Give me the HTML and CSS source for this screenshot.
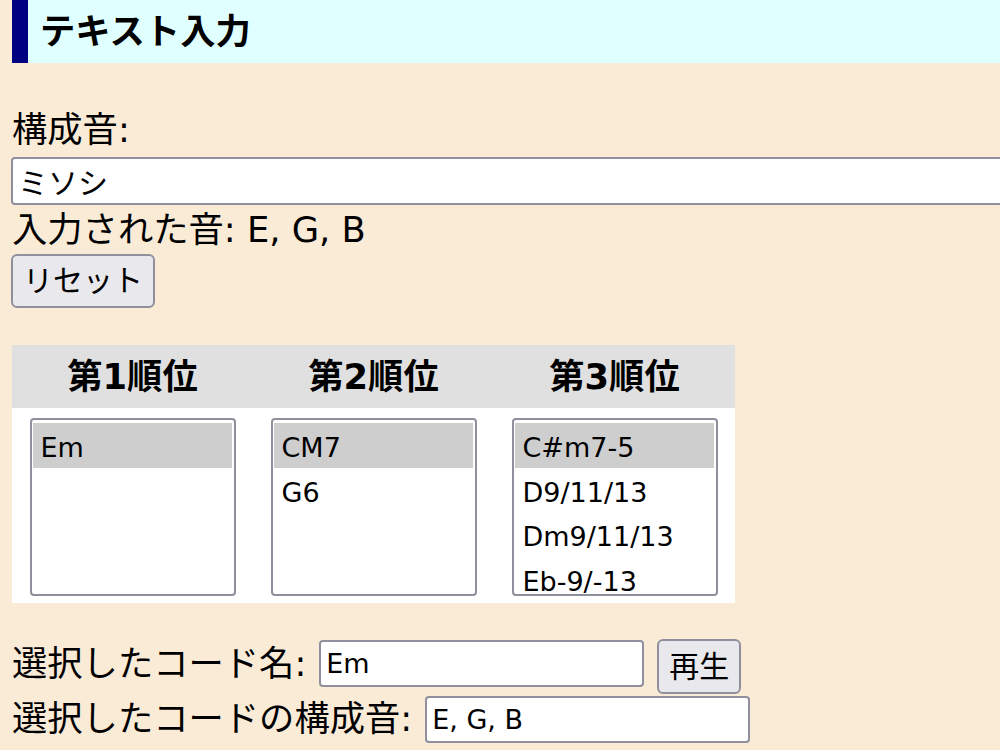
FILE: index.html
```
<!DOCTYPE html>
<html lang="ja">
<head>
<meta charset="utf-8">
<title>テキスト入力</title>
<link rel="stylesheet" href="styles.css">
</head>
<body>
<h2 class="title">テキスト入力</h2>
<div class="field-label">構成音:</div>
<input class="ctl notes-input" type="text" value="ミソシ">
<div class="parsed">入力された音: E, G, B</div>
<button class="btn btn-reset" type="button">リセット</button>
<table class="rank">
  <thead>
    <tr><th>第1順位</th><th>第2順位</th><th>第3順位</th></tr>
  </thead>
  <tbody>
    <tr>
      <td><div class="listbox" role="listbox"><div class="opt sel">Em</div></div></td>
      <td><div class="listbox" role="listbox"><div class="opt sel">CM7</div><div class="opt">G6</div></div></td>
      <td><div class="listbox" role="listbox"><div class="opt sel">C#m7-5</div><div class="opt">D9/11/13</div><div class="opt">Dm9/11/13</div><div class="opt">Eb-9/-13</div></div></td>
    </tr>
  </tbody>
</table>
<div class="row row-name">
  <span class="lbl">選択したコード名:</span>
  <input class="ctl out" type="text" value="Em">
  <button class="btn btn-play" type="button">再生</button>
</div>
<div class="row row-notes">
  <span class="lbl">選択したコードの構成音:</span>
  <input class="ctl out" type="text" value="E, G, B">
</div>
</body>
</html>
```

FILE: styles.css
```
html {
  overflow: hidden;
}

body {
  margin: 0;
  padding-left: 12px;
  background: #faebd7;
  color: #000;
  font-family: "DejaVu Sans", "Noto Sans CJK JP", sans-serif;
  font-size: 35.3px;
  line-height: 49px;
}

.title {
  margin: 0;
  background: #e0ffff;
  border-left: 16px solid #000080;
  padding: 7px 12px;
  font-size: 35.3px;
  line-height: 49px;
  font-weight: bold;
}

.field-label {
  margin-top: 42px;
}

.ctl {
  box-sizing: border-box;
  border: 2px solid #8f8f9d;
  border-radius: 4px;
  background: #fff;
  color: #000;
  padding: 0 5px;
  font-family: "DejaVu Sans", "Noto Sans CJK JP", sans-serif;
  font-size: 27px;
  outline: none;
}

.notes-input {
  display: block;
  margin: 3px 0 0 -1px;
  width: 1100px;
  height: 48px;
  font-size: 30px;
  padding-left: 5px;
}

.btn {
  box-sizing: border-box;
  background: #e9e9ed;
  border: 2px solid #8f8f9d;
  border-radius: 6px;
  color: #000;
  font-family: "Noto Sans CJK JP", sans-serif;
  font-size: 30px;
  line-height: 40px;
  padding: 0 10px 6px;
  height: 54px;
  white-space: nowrap;
}

.btn-reset {
  display: block;
  margin-left: -1px;
}

.rank {
  margin-top: 37px;
  border-collapse: collapse;
  border-spacing: 0;
  width: 723px;
  table-layout: fixed;
}

.rank th {
  background: #e0e0e0;
  padding: 7px 0;
  font-weight: bold;
  line-height: 49px;
}

.rank td {
  background: #fff;
  text-align: center;
  padding: 10px 0 7px;
}

.listbox {
  display: inline-block;
  vertical-align: top;
  box-sizing: border-box;
  width: 206px;
  height: 178px;
  border: 2px solid #8f8f9d;
  border-radius: 4px;
  padding: 3px 2px 0 1px;
  overflow: hidden;
  text-align: left;
  background: #fff;
  font-family: "DejaVu Sans", sans-serif;
  font-size: 27px;
}

.opt {
  box-sizing: border-box;
  height: 44.5px;
  line-height: 38.5px;
  padding: 6px 0 0 8px;
  white-space: nowrap;
}

.opt.sel {
  background: #cecece;
}

.row {
  display: flex;
  align-items: flex-start;
}

.row-name {
  margin-top: 36px;
}

.lbl {
  white-space: nowrap;
}

.out {
  width: 325px;
  height: 47px;
  margin-left: 13px;
  margin-top: 1px;
}

.btn-play {
  margin-left: 13px;
  height: 55px;
}

.row-notes .out {
  margin-top: 2px;
}
```
